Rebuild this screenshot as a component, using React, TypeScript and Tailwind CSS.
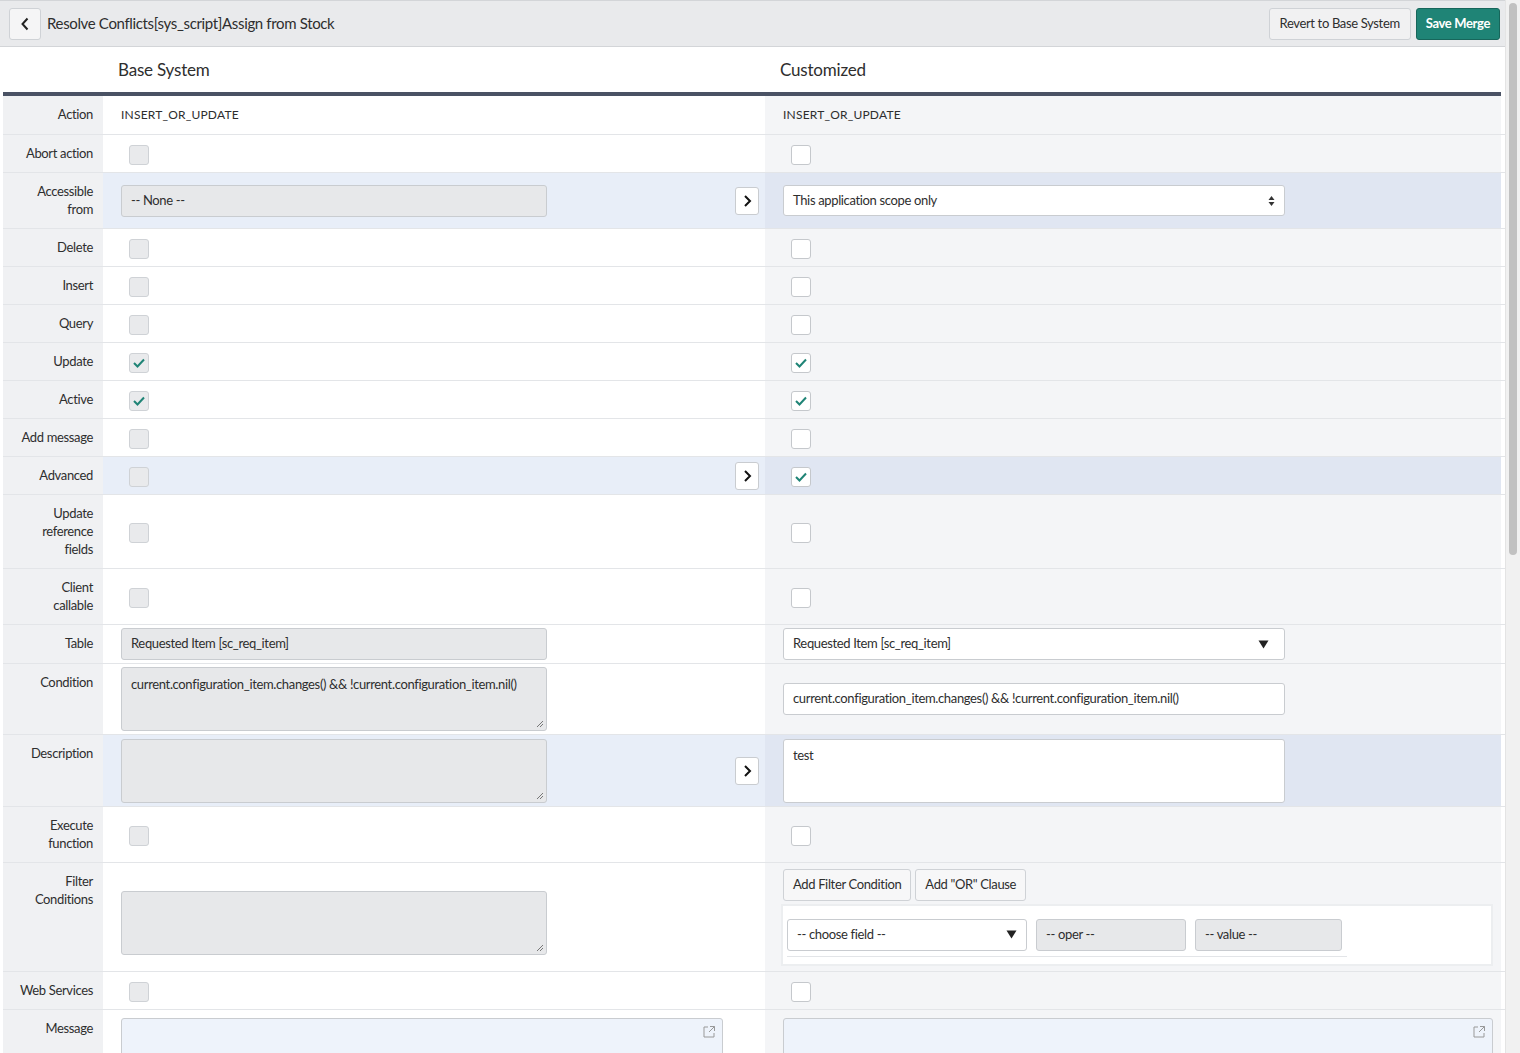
import React from 'react';

const font = { fontFamily: 'Lato, "Open Sans", sans-serif' };

function Check({ checked, side }: { checked?: boolean; side: 'l' | 'r' }) {
  return (
    <div
      className={`w-[20px] h-[20px] mt-[2px] rounded-[3px] border flex items-center justify-center ${
        side === 'l' ? 'border-[#cfd2d6] bg-[#e9eaec]' : 'border-[#c5c8cc] bg-white'
      }`}
    >
      {checked && (
        <svg width="12" height="10" viewBox="0 0 12 10">
          <path d="M1 5 L4.5 8.5 L11 1.5" fill="none" stroke="#1f8476" strokeWidth="2" />
        </svg>
      )}
    </div>
  );
}

function Arrow() {
  return (
    <div className="w-[24px] h-[28px] bg-white border border-[#c9ccd0] rounded-[3px] flex items-center justify-center">
      <svg width="9" height="14" viewBox="0 0 9 14">
        <path d="M2 2 L7 7 L2 12" fill="none" stroke="#111" strokeWidth="2" />
      </svg>
    </div>
  );
}

type RowProps = {
  label: React.ReactNode;
  h: number;
  left?: React.ReactNode;
  right?: React.ReactNode;
  hl?: boolean;
  arrow?: boolean;
  align?: string;
};

function Row({ label, h, left, right, hl, arrow, align = 'items-center' }: RowProps) {
  return (
    <div className="grid grid-cols-[100px_662px_736px] border-b border-[#e3e5e8]" style={{ height: h }}>
      <div className="bg-[#f0f1f3] text-right pr-[10px] pt-[9px] text-[13px] leading-[18px] text-[#2e2e2e]">{label}</div>
      <div className={`flex ${align} pl-[18px] pr-[6px] ${hl ? 'bg-[#e8eef8]' : 'bg-white'}`}>
        <div className="flex-1 flex">{left}</div>
        {arrow && <Arrow />}
      </div>
      <div className={`flex ${align} pl-[18px] ${hl ? 'bg-[#e0e6f2]' : 'bg-[#f4f5f7]'}`}>{right}</div>
    </div>
  );
}

const grayBox = 'w-[426px] bg-[#e7e8ea] border border-[#c9ccd0] rounded-[3px] text-[13px] text-[#2e2e2e] px-[9px]';
const whiteBox = 'w-[502px] bg-white border border-[#c9ccd0] rounded-[3px] text-[13px] text-[#2e2e2e] px-[9px]';

function Resize() {
  return (
    <svg className="absolute right-[2px] bottom-[2px]" width="8" height="8" viewBox="0 0 8 8">
      <path d="M1 7 L7 1 M4 7 L7 4" stroke="#777" strokeWidth="1" />
    </svg>
  );
}

function Popout() {
  return (
    <svg className="absolute right-[6px] top-[6px]" width="14" height="14" viewBox="0 0 14 14">
      <path d="M6 2 H2 V12 H12 V8 M8 1.5 H12.5 V6 M12.5 1.5 L7 7" fill="none" stroke="#999" strokeWidth="1" />
    </svg>
  );
}

export default function App() {
  return (
    <div className="w-[1520px] h-[1053px] overflow-hidden flex bg-white tracking-[-0.35px]" style={font}>
      <div className="w-[1505px] flex flex-col">
        {/* header */}
        <div className="h-[47px] bg-[#e9eaec] border-t border-[#4f7a6b] border-b border-[#d3d5d8] flex items-center pl-[9px] pr-[5px] shrink-0">
          <div className="w-[32px] h-[32px] bg-[#f5f5f6] border border-[#cfd2d6] rounded-[3px] flex items-center justify-center">
            <svg width="10" height="14" viewBox="0 0 10 14">
              <path d="M7.5 1.5 L2.5 7 L7.5 12.5" fill="none" stroke="#222" strokeWidth="2" />
            </svg>
          </div>
          <span className="ml-[6px] text-[15px] text-[#2e2e2e]">Resolve Conflicts[sys_script]Assign from Stock</span>
          <div className="ml-auto flex gap-[5px]">
            <button className="h-[32px] px-[10px] bg-[#f1f1f2] border border-[#cfd2d6] rounded-[3px] text-[13px] text-[#2e2e2e]">
              Revert to Base System
            </button>
            <button className="h-[32px] px-[9px] bg-[#1f8476] border border-[#17665b] rounded-[3px] text-[13px] font-bold text-white">
              Save Merge
            </button>
          </div>
        </div>
        {/* column headings */}
        <div className="h-[45px] flex items-center text-[17px] text-[#2e2e2e] shrink-0 tracking-[-0.2px]">
          <span className="pl-[118px] w-[780px]">Base System</span>
          <span>Customized</span>
        </div>
        <div className="pl-[3px]">
          <div className="w-[1498px] h-[4px] bg-[#4a5264]" />
          <Row
            label="Action"
            h={39}
            left={<span className="text-[12px] tracking-[0.2px] text-[#2e2e2e]">INSERT_OR_UPDATE</span>}
            right={<span className="text-[12px] tracking-[0.2px] text-[#2e2e2e]">INSERT_OR_UPDATE</span>}
          />
          <Row label="Abort action" h={38} left={<div className="pl-[8px]"><Check side="l" /></div>} right={<div className="pl-[8px]"><Check side="r" /></div>} />
          <Row
            label={<>Accessible<br />from</>}
            h={56}
            hl
            arrow
            left={<div className={`${grayBox} h-[32px] flex items-center`}>-- None --</div>}
            right={
              <div className={`${whiteBox} h-[31px] flex items-center justify-between`}>
                This application scope only
                <svg width="7" height="12" viewBox="0 0 7 12"><path d="M3.5 1 L6.5 5 H0.5 Z M0.5 7 H6.5 L3.5 11 Z" fill="#333" /></svg>
              </div>
            }
          />
          {[
            ['Delete', false, false],
            ['Insert', false, false],
            ['Query', false, false],
            ['Update', true, true],
            ['Active', true, true],
            ['Add message', false, false],
          ].map(([l, a, b]) => (
            <Row
              key={l as string}
              label={l as string}
              h={38}
              left={<div className="pl-[8px]"><Check side="l" checked={a as boolean} /></div>}
              right={<div className="pl-[8px]"><Check side="r" checked={b as boolean} /></div>}
            />
          ))}
          <Row label="Advanced" h={38} hl arrow left={<div className="pl-[8px]"><Check side="l" /></div>} right={<div className="pl-[8px]"><Check side="r" checked /></div>} />
          <Row label={<>Update<br />reference<br />fields</>} h={74} left={<div className="pl-[8px]"><Check side="l" /></div>} right={<div className="pl-[8px]"><Check side="r" /></div>} />
          <Row label={<>Client<br />callable</>} h={56} left={<div className="pl-[8px]"><Check side="l" /></div>} right={<div className="pl-[8px]"><Check side="r" /></div>} />
          <Row
            label="Table"
            h={39}
            left={<div className={`${grayBox} h-[32px] flex items-center`}>Requested Item [sc_req_item]</div>}
            right={
              <div className={`${whiteBox} h-[32px] flex items-center justify-between`}>
                Requested Item [sc_req_item]
                <svg width="11" height="9" viewBox="0 0 11 9" className="mr-[6px]"><path d="M0.5 0.5 H10.5 L5.5 8.5 Z" fill="#222" /></svg>
              </div>
            }
          />
          <Row
            label="Condition"
            h={71}
            left={
              <div className={`${grayBox} h-[64px] pt-[7px] relative whitespace-nowrap overflow-hidden`}>
                current.configuration_item.changes() &amp;&amp; !current.configuration_item.nil()
                <Resize />
              </div>
            }
            right={
              <div className={`${whiteBox} h-[32px] flex items-center whitespace-nowrap`}>
                current.configuration_item.changes() &amp;&amp; !current.configuration_item.nil()
              </div>
            }
          />
          <Row
            label="Description"
            h={72}
            hl
            arrow
            left={<div className={`${grayBox} h-[64px] relative`}><Resize /></div>}
            right={<div className={`${whiteBox} h-[64px] pt-[6px]`}>test</div>}
          />
          <Row label={<>Execute<br />function</>} h={56} left={<div className="pl-[8px]"><Check side="l" /></div>} right={<div className="pl-[8px]"><Check side="r" /></div>} />
          <Row
            label={<>Filter<br />Conditions</>}
            h={109}
            left={<div className={`${grayBox} h-[64px] relative mt-[12px]`}><Resize /></div>}
            right={
              <div className="flex flex-col w-[712px] -ml-[2px] gap-[3px]">
                <div className="flex gap-[4px] ml-[2px]">
                  <button className="h-[32px] px-[9px] bg-[#f7f7f8] border border-[#cfd2d6] rounded-[3px] text-[13px] text-[#2e2e2e]">Add Filter Condition</button>
                  <button className="h-[32px] px-[9px] bg-[#f7f7f8] border border-[#cfd2d6] rounded-[3px] text-[13px] text-[#2e2e2e]">Add "OR" Clause</button>
                </div>
                <div className="h-[62px] bg-white border-[2px] border-[#eceef0] pl-[4px] pt-[13px]">
                  <div className="flex gap-[9px] w-[560px] border-b border-[#e3e5e8] pb-[5px]">
                    <div className="w-[240px] h-[32px] bg-white border border-[#c9ccd0] rounded-[3px] text-[13px] text-[#2e2e2e] px-[9px] flex items-center justify-between">
                      -- choose field --
                      <svg width="11" height="9" viewBox="0 0 11 9"><path d="M0.5 0.5 H10.5 L5.5 8.5 Z" fill="#222" /></svg>
                    </div>
                    <div className="w-[150px] h-[32px] bg-[#e7e8ea] border border-[#c9ccd0] rounded-[3px] text-[13px] text-[#2e2e2e] px-[9px] flex items-center">-- oper --</div>
                    <div className="w-[147px] h-[32px] bg-[#e7e8ea] border border-[#c9ccd0] rounded-[3px] text-[13px] text-[#2e2e2e] px-[9px] flex items-center">-- value --</div>
                  </div>
                </div>
              </div>
            }
          />
          <Row label="Web Services" h={38} left={<div className="pl-[8px]"><Check side="l" /></div>} right={<div className="pl-[8px]"><Check side="r" /></div>} />
          <Row
            label="Message"
            h={60}
            align="items-start"
            left={<div className="w-[602px] h-[50px] mt-[8px] bg-[#eef3fb] border border-[#c9ccd0] rounded-[3px] relative"><Popout /></div>}
            right={<div className="w-[710px] h-[50px] mt-[8px] bg-[#eef3fb] border border-[#c9ccd0] rounded-[3px] relative"><Popout /></div>}
          />
        </div>
      </div>
      <div className="w-[15px] bg-[#f1f1f1] border-l border-[#e4e4e4] flex justify-center pt-[3px]">
        <div className="w-[8px] h-[552px] bg-[#c1c1c1] rounded-[4px]" />
      </div>
    </div>
  );
}
